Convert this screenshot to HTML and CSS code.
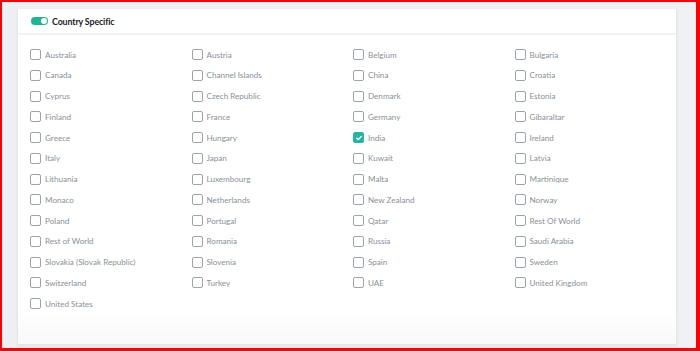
FILE: index.html
```html
<!DOCTYPE html>
<html>
<head>
<meta charset="utf-8">
<link rel="stylesheet" href="styles.css">
</head>
<body>
<div class="frame">
  <div class="card">
    <div class="card-header">
      <span class="toggle"><span class="knob"></span></span>
      <span class="title">Country Specific</span>
    </div>
    <div class="card-body">
      <label class="item"><span class="box"></span>Australia</label>
      <label class="item"><span class="box"></span>Austria</label>
      <label class="item"><span class="box"></span>Belgium</label>
      <label class="item"><span class="box"></span>Bulgaria</label>
      <label class="item"><span class="box"></span>Canada</label>
      <label class="item"><span class="box"></span>Channel Islands</label>
      <label class="item"><span class="box"></span>China</label>
      <label class="item"><span class="box"></span>Croatia</label>
      <label class="item"><span class="box"></span>Cyprus</label>
      <label class="item"><span class="box"></span>Czech Republic</label>
      <label class="item"><span class="box"></span>Denmark</label>
      <label class="item"><span class="box"></span>Estonia</label>
      <label class="item"><span class="box"></span>Finland</label>
      <label class="item"><span class="box"></span>France</label>
      <label class="item"><span class="box"></span>Germany</label>
      <label class="item"><span class="box"></span>Gibaraltar</label>
      <label class="item"><span class="box"></span>Greece</label>
      <label class="item"><span class="box"></span>Hungary</label>
      <label class="item"><span class="box checked"><svg viewBox="0 0 10 10" width="8" height="8"><path d="M2.2 5.2 L4.2 7.1 L7.9 3" fill="none" stroke="#fff" stroke-width="1.6" stroke-linecap="round" stroke-linejoin="round"/></svg></span>India</label>
      <label class="item"><span class="box"></span>Ireland</label>
      <label class="item"><span class="box"></span>Italy</label>
      <label class="item"><span class="box"></span>Japan</label>
      <label class="item"><span class="box"></span>Kuwait</label>
      <label class="item"><span class="box"></span>Latvia</label>
      <label class="item"><span class="box"></span>Lithuania</label>
      <label class="item"><span class="box"></span>Luxembourg</label>
      <label class="item"><span class="box"></span>Malta</label>
      <label class="item"><span class="box"></span>Martinique</label>
      <label class="item"><span class="box"></span>Monaco</label>
      <label class="item"><span class="box"></span>Netherlands</label>
      <label class="item"><span class="box"></span>New Zealand</label>
      <label class="item"><span class="box"></span>Norway</label>
      <label class="item"><span class="box"></span>Poland</label>
      <label class="item"><span class="box"></span>Portugal</label>
      <label class="item"><span class="box"></span>Qatar</label>
      <label class="item"><span class="box"></span>Rest Of World</label>
      <label class="item"><span class="box"></span>Rest of World</label>
      <label class="item"><span class="box"></span>Romania</label>
      <label class="item"><span class="box"></span>Russia</label>
      <label class="item"><span class="box"></span>Saudi Arabia</label>
      <label class="item"><span class="box"></span>Slovakia (Slovak Republic)</label>
      <label class="item"><span class="box"></span>Slovenia</label>
      <label class="item"><span class="box"></span>Spain</label>
      <label class="item"><span class="box"></span>Sweden</label>
      <label class="item"><span class="box"></span>Switzerland</label>
      <label class="item"><span class="box"></span>Turkey</label>
      <label class="item"><span class="box"></span>UAE</label>
      <label class="item"><span class="box"></span>United Kingdom</label>
      <label class="item"><span class="box"></span>United States</label>
    </div>
  </div>
</div>
</body>
</html>
```

FILE: styles.css
```css
html, body {
  margin: 0;
  padding: 0;
}
body {
  width: 700px;
  height: 351px;
  overflow: hidden;
  font-family: Lato, "Noto Sans", sans-serif;
}
.frame {
  box-sizing: border-box;
  width: 700px;
  height: 351px;
  border-style: solid;
  border-color: #ff0000;
  border-width: 2px 4px 3px 2px;
  background: #eef0f3;
  padding: 6px 19px 0 15px;
}
.card {
  background: linear-gradient(to bottom, #ffffff 0, #ffffff 300px, #f8f8f9 337px);
  height: 337px;
  box-sizing: border-box;
  border: 1px solid #e4e6e9;
  border-top-color: #eceef0;
  box-shadow: 0 1px 2px rgba(0, 0, 0, 0.06);
}
.card-header {
  height: 24px;
  display: flex;
  align-items: center;
  padding-left: 13px;
  gap: 4px;
  border-bottom: 2px solid #f1f2f4;
}
.toggle {
  width: 17px;
  height: 8px;
  border-radius: 4px;
  background: #1db595;
  display: flex;
  align-items: center;
  justify-content: flex-end;
  padding-right: 1px;
  box-sizing: border-box;
}
.knob {
  width: 6px;
  height: 6px;
  border-radius: 50%;
  background: #fff;
}
.title {
  font-size: 8.9px;
  font-weight: 700;
  color: #1f2328;
  letter-spacing: -0.15px;
}
.card-body {
  display: grid;
  grid-template-columns: repeat(4, 161.5px);
  row-gap: 9.75px;
  padding: 14px 0 0 12px;
}
.item {
  display: flex;
  align-items: center;
  height: 11px;
  gap: 4px;
  font-size: 8.1px;
  color: #8a9098;
  white-space: nowrap;
}
.box {
  box-sizing: border-box;
  width: 11px;
  height: 11px;
  border: 1.3px solid #9ba3ab;
  border-radius: 2px;
  flex: none;
  display: flex;
  align-items: center;
  justify-content: center;
}
.box.checked {
  background: #26b4a3;
  border-color: #26b4a3;
}
```
